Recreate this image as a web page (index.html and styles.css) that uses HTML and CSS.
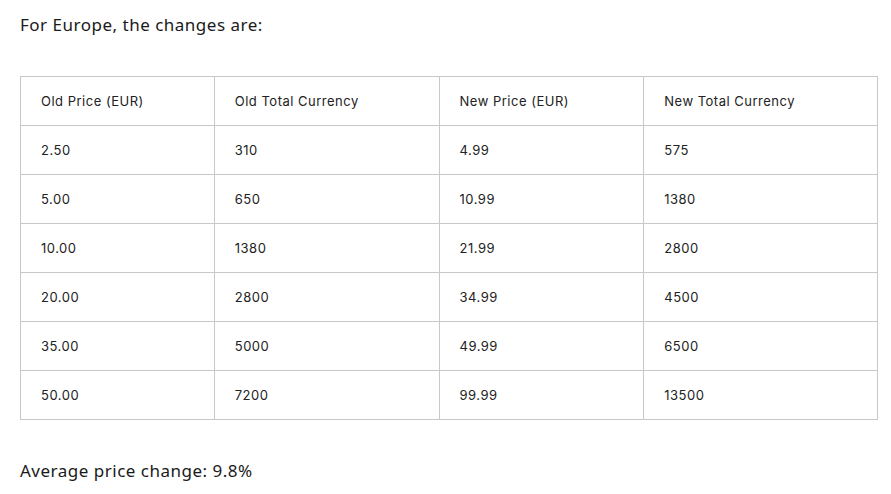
FILE: index.html
```html
<!DOCTYPE html>
<html>
<head>
<meta charset="utf-8">
<link rel="stylesheet" href="styles.css">
</head>
<body>
<main class="content">
  <p class="lead">For Europe, the changes are:</p>
  <table class="prices">
    <colgroup>
      <col class="c1"><col class="c2"><col class="c3"><col class="c4">
    </colgroup>
    <tr><td>Old Price (EUR)</td><td>Old Total Currency</td><td>New Price (EUR)</td><td>New Total Currency</td></tr>
    <tr><td>2.50</td><td>310</td><td>4.99</td><td>575</td></tr>
    <tr><td>5.00</td><td>650</td><td>10.99</td><td>1380</td></tr>
    <tr><td>10.00</td><td>1380</td><td>21.99</td><td>2800</td></tr>
    <tr><td>20.00</td><td>2800</td><td>34.99</td><td>4500</td></tr>
    <tr><td>35.00</td><td>5000</td><td>49.99</td><td>6500</td></tr>
    <tr><td>50.00</td><td>7200</td><td>99.99</td><td>13500</td></tr>
  </table>
  <p class="summary">Average price change: 9.8%</p>
</main>
</body>
</html>
```

FILE: styles.css
```css
html, body {
  margin: 0;
  padding: 0;
  background: #ffffff;
}
.content {
  padding: 12px 14px 0 20px;
  font-family: "Noto Sans", "Open Sans", sans-serif;
  color: #1a1a1a;
}
.lead, .summary {
  margin: 0;
  font-size: 17px;
  line-height: 26px;
  letter-spacing: 0.5px;
}
.prices {
  margin-top: 38px;
  width: 858px;
  border-collapse: collapse;
  font-family: Inter, "Liberation Sans", sans-serif;
  font-size: 13px;
  letter-spacing: 0.5px;
  color: #222;
}
.c1 { width: 194px; }
.c2 { width: 225px; }
.c3 { width: 205px; }
.c4 { width: 234px; }
.prices td {
  border: 1px solid #c8c8c8;
  height: 49px;
  padding: 0 0 0 20px;
  vertical-align: middle;
  box-sizing: border-box;
}
.summary {
  margin-top: 38px;
}
```
